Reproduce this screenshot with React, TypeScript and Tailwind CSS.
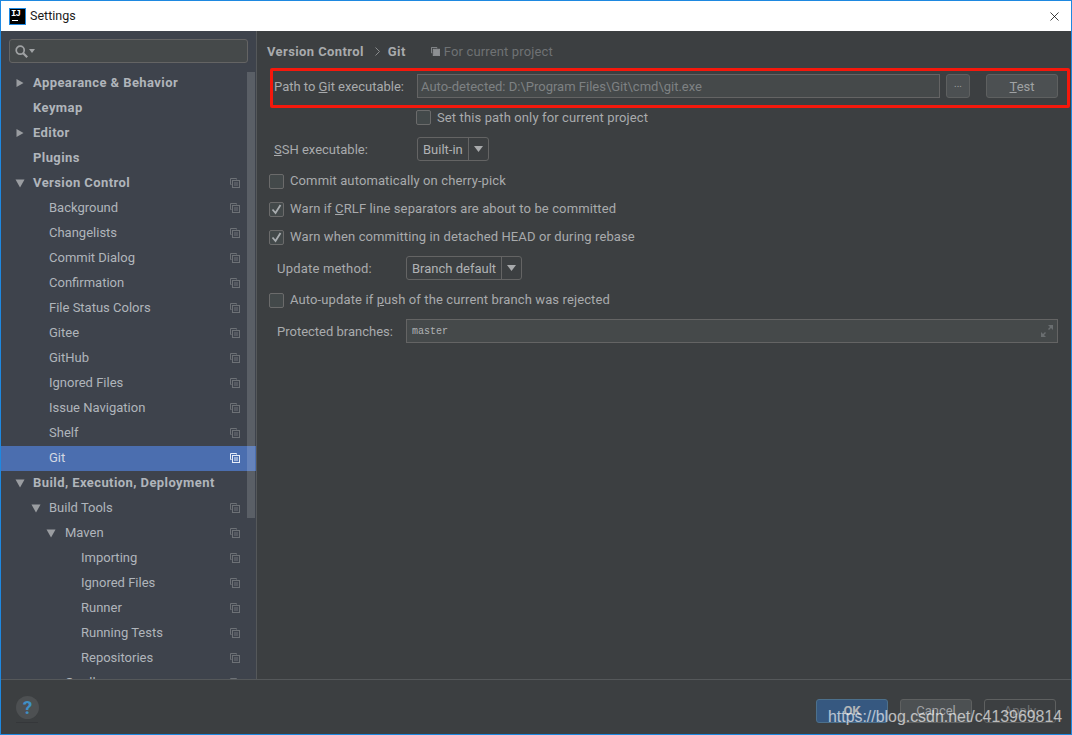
import { ReactNode } from "react";
import { X } from "lucide-react";

const font = { fontFamily: 'Roboto, "Noto Sans", sans-serif' };

type Node = { label: string; level: 0 | 1 | 2 | 3; arrow?: "right" | "down"; copy?: boolean; bold?: boolean; active?: boolean };

const tree: Node[] = [
  { label: "Appearance & Behavior", level: 0, arrow: "right", bold: true },
  { label: "Keymap", level: 0, bold: true },
  { label: "Editor", level: 0, arrow: "right", bold: true },
  { label: "Plugins", level: 0, bold: true },
  { label: "Version Control", level: 0, arrow: "down", bold: true, copy: true },
  { label: "Background", level: 1, copy: true },
  { label: "Changelists", level: 1, copy: true },
  { label: "Commit Dialog", level: 1, copy: true },
  { label: "Confirmation", level: 1, copy: true },
  { label: "File Status Colors", level: 1, copy: true },
  { label: "Gitee", level: 1, copy: true },
  { label: "GitHub", level: 1, copy: true },
  { label: "Ignored Files", level: 1, copy: true },
  { label: "Issue Navigation", level: 1, copy: true },
  { label: "Shelf", level: 1, copy: true },
  { label: "Git", level: 1, copy: true, active: true },
  { label: "Build, Execution, Deployment", level: 0, arrow: "down", bold: true },
  { label: "Build Tools", level: 1, arrow: "down", copy: true },
  { label: "Maven", level: 2, arrow: "down", copy: true },
  { label: "Importing", level: 3, copy: true },
  { label: "Ignored Files", level: 3, copy: true },
  { label: "Runner", level: 3, copy: true },
  { label: "Running Tests", level: 3, copy: true },
  { label: "Repositories", level: 3, copy: true },
  { label: "Gradle", level: 2, arrow: "right", copy: true },
];

const levelClass = ["pl-[32px]", "pl-[48px]", "pl-[64px]", "pl-[80px]"];
const arrowClass = ["left-[14px]", "left-[30px]", "left-[45px]", "left-[61px]"];

const CopyIcon = ({ bright }: { bright?: boolean }) => (
  <svg width="10" height="10" viewBox="0 0 10 10" fill="none" stroke={bright ? "#e6ecf7" : "#6d7176"} strokeWidth="1">
    <path d="M6.5 1.5V.5H.5v6h1" />
    <rect x="2.5" y="2.5" width="7" height="7" />
    <path d="M4 5h4M4 7h4" />
  </svg>
);

const Arrow = ({ dir }: { dir: "right" | "down" }) => (
  <svg width="10" height="10" viewBox="0 0 10 10" fill="#9a9da1">
    {dir === "right" ? <path d="M1.5 1l7 4-7 4z" /> : <path d="M.5 1.5h9L5 9.5z" />}
  </svg>
);

const TreeRow = ({ node }: { node: Node }) => (
  <div
    className={`relative flex h-[25px] shrink-0 items-center pb-[2px] text-[13px] ${levelClass[node.level]} ${
      node.active ? "bg-[#4b6eaf] text-[#d3d8e2]" : "text-[#b0b5bb]"
    } ${node.bold ? "font-bold tracking-[0.42px]" : ""}`}
  >
    {node.arrow && (
      <span className={`absolute ${arrowClass[node.level]} top-[7px]`}>
        <Arrow dir={node.arrow} />
      </span>
    )}
    <span>{node.label}</span>
    {node.copy && (
      <span className="absolute left-[229px] top-[7px]">
        <CopyIcon bright={node.active} />
      </span>
    )}
  </div>
);

const Check = ({ checked }: { checked?: boolean }) => (
  <span className="-ml-px flex h-[15px] w-[15px] shrink-0 items-center justify-center rounded-[2px] border border-[#6b6b6b] bg-[#43494a]">
    {checked && (
      <svg width="11" height="11" viewBox="0 0 11 11" fill="none" stroke="#a9adb0" strokeWidth="1.8">
        <path d="M1.5 5.5l3 3.5 5-8" />
      </svg>
    )}
  </span>
);

const CheckRow = ({ checked, indent, children }: { checked?: boolean; indent?: boolean; children: ReactNode }) => (
  <div className={`flex h-[20px] items-center gap-[6px] ${indent ? "pl-[147px]" : ""} text-[13px] tracking-[0.12px] text-[#a9abad]`}>
    <Check checked={checked} />
    <span>{children}</span>
  </div>
);

const Combo = ({ label, width }: { label: string; width: string }) => (
  <div className={`flex h-[24px] ${width} items-center rounded-[3px] border border-[#646464] bg-[#3c3f41] text-[13px] text-[#b0b2b4]`}>
    <span className="flex-1 truncate pl-[5px] pt-[2px]">{label}</span>
    <span className="flex h-full w-[20px] items-center justify-center border-l border-[#646464]">
      <svg width="9" height="6" viewBox="0 0 9 6" fill="#a8aaac">
        <path d="M0 0h9L4.5 6z" />
      </svg>
    </span>
  </div>
);

const Footer = () => (
  <div className="relative flex h-[55px] shrink-0 items-start justify-between border-t border-[#55585a] bg-[#3c3f41] pl-[15px] pr-[15px] pt-[16px]">
    <div className="relative flex h-[23px] w-[23px] items-center justify-center rounded-full bg-[#4d5052] text-[19px] font-bold leading-none text-[#3f8fc4]">
      ?
      <span className="absolute left-0 top-[26px] h-px w-[22px] bg-[#35373a]" />
    </div>
    <div className="mt-[3px] flex gap-[12px] text-[13px]">
      <button className="h-[24px] w-[72px] rounded-[3px] border border-[#4c708c] bg-[#365880] font-bold text-[#b4b6b8]">OK</button>
      <button className="h-[24px] w-[72px] rounded-[3px] border border-[#5e6060] bg-[#4c5052] text-[#a0a2a4]">Cancel</button>
      <button className="h-[24px] w-[72px] rounded-[3px] border border-[#5e6060] text-[#6f7173]">Apply</button>
    </div>
  </div>
);

export default function App() {
  return (
    <div className="relative flex h-[735px] w-[1072px] flex-col overflow-hidden border border-[#1e88e0] bg-[#3c3f41]" style={font}>
      {/* title bar */}
      <div className="flex h-[30px] shrink-0 items-center bg-white pl-[8px] pr-[9px]">
        <div className="relative h-[17px] w-[17px] border border-[#1e88e0] bg-black">
          <span
            className="absolute left-[1px] top-[1px] text-[9px] font-bold leading-[9px] tracking-[-0.8px] text-white"
            style={{ fontFamily: '"Liberation Mono", monospace' }}
          >
            IJ
          </span>
          <span className="absolute bottom-[3px] left-[2px] h-px w-[6px] bg-white" />
        </div>
        <span className="ml-[4px] text-[12.5px] text-[#1a1a1a]">Settings</span>
        <X size={15} strokeWidth={1.2} className="ml-auto text-black" />
      </div>

      <div className="flex min-h-0 flex-1">
        {/* sidebar */}
        <div className="relative flex w-[256px] shrink-0 flex-col overflow-hidden border-r border-[#55585a] bg-[#3e434c]">
          <div className="mx-[8px] mt-[8px] flex h-[24px] w-[239px] shrink-0 items-center gap-px rounded-[3px] border border-[#646464] bg-[#45494a] pl-[5px]">
            <svg width="13" height="13" viewBox="0 0 13 13" fill="none" stroke="#a0a2a4" strokeWidth="1.7">
              <circle cx="5.2" cy="5.2" r="4" />
              <path d="M8.2 8.2l4 4" strokeWidth="2.2" />
            </svg>
            <svg width="6" height="4" viewBox="0 0 6 4" fill="#a0a2a4">
              <path d="M0 0h6L3 4z" />
            </svg>
          </div>
          <div className="mt-[8px] flex min-h-0 flex-1 flex-col overflow-hidden">
            {tree.map((node, i) => (
              <TreeRow key={i} node={node} />
            ))}
          </div>
          <div className="absolute left-[246px] top-[41px] h-[446px] w-[8px] bg-white/15" />
        </div>

        {/* content */}
        <div className="relative min-w-0 flex-1 px-[13px] pt-[8px]">
          <div className="-ml-[3px] flex h-[24px] items-center pt-px text-[13px]">
            <span className="font-bold tracking-[0.4px] text-[#a9abad]">Version Control</span>
            <svg className="ml-[11px]" width="5" height="9" viewBox="0 0 5 9" fill="none" stroke="#8a8c8e">
              <path d="M.5.5l4 4-4 4" />
            </svg>
            <span className="ml-[8px] font-bold tracking-[0.4px] text-[#a9abad]">Git</span>
            <span className="ml-[25px]">
              <svg width="9" height="9" viewBox="0 0 10 10" fill="#8d9093" stroke="#8d9093">
                <path d="M6.5 1.5V.5H.5v6h1" fill="none" />
                <rect x="2.5" y="2.5" width="7" height="7" />
              </svg>
            </span>
            <span className="ml-[4px] tracking-[0.15px] text-[#6f7274]">For current project</span>
          </div>

          <div className="mt-[11px] flex h-[24px] items-center text-[13px] text-[#a9abad]">
            <span className="w-[147px] shrink-0 pl-[4px] pt-[1px]">
              Path to <u>G</u>it executable:
            </span>
            <div className="flex h-full min-w-0 flex-1 items-center border border-[#646464] bg-[#45494a] pl-[3px] pt-[1px] text-[#7e8183]">
              Auto-detected: D:\Program Files\Git\cmd\git.exe
            </div>
            <button className="ml-[6px] flex h-full w-[24px] items-center justify-center rounded-[3px] border border-[#5e6060] bg-[#4c5052] pb-[5px] text-[10px] text-[#a0a2a4]">
              ...
            </button>
            <button className="ml-[16px] h-full w-[72px] rounded-[3px] border border-[#5e6060] bg-[#4c5052] pt-[2px] text-[#a0a2a4]">
              <u>T</u>est
            </button>
          </div>

          <div className="mt-[9px]">
            <CheckRow indent>
              <span className="relative top-px">Set this path only for current project</span>
            </CheckRow>
          </div>

          <div className="mt-[10px] flex h-[24px] items-center text-[13px] text-[#a9abad]">
            <span className="w-[147px] shrink-0 pl-[4px] pt-[2px]">
              <u>S</u>SH executable:
            </span>
            <Combo label="Built-in" width="w-[72px]" />
          </div>

          <div className="mt-[10px]">
            <CheckRow>Commit automatically on cherry-pick</CheckRow>
          </div>
          <div className="mt-[8px]">
            <CheckRow checked>
              Warn if <u>C</u>RLF line separators are about to be committed
            </CheckRow>
          </div>
          <div className="mt-[8px]">
            <CheckRow checked>Warn when committing in detached HEAD or during rebase</CheckRow>
          </div>

          <div className="mt-[9px] flex h-[24px] items-center text-[13px] text-[#a9abad]">
            <span className="w-[136px] shrink-0 pl-[7px] pt-[2px] tracking-[0.2px]">Update method:</span>
            <Combo label="Branch default" width="w-[116px]" />
          </div>

          <div className="mt-[10px]">
            <CheckRow>
              Auto-update if <u>p</u>ush of the current branch was rejected
            </CheckRow>
          </div>

          <div className="mt-[9px] flex h-[24px] items-center text-[13px] text-[#a9abad]">
            <span className="w-[136px] shrink-0 pl-[7px] pt-[2px]">Protected branches:</span>
            <div className="flex h-full flex-1 items-center justify-between border border-[#646464] bg-[#45494a] pl-[5px] pr-[4px]">
              <span className="text-[10px] text-[#b0b2b4]" style={{ fontFamily: '"Liberation Mono", monospace' }}>
                master
              </span>
              <svg width="12" height="12" viewBox="0 0 12 12" fill="#6a6e70">
                <path d="M12 0v5l-2-2-2 2-1-1 2-2-2-2zM0 12V7l2 2 2-2 1 1-2 2 2 2z" />
              </svg>
            </div>
          </div>

          {/* red annotation drawn over the screenshot */}
          <div className="absolute left-[13px] top-[37px] h-[40px] w-[800px] rounded-[2px] border-[3px] border-[#f5180c]" />
        </div>
      </div>

      <Footer />

      {/* watermark */}
      <span
        className="absolute left-[827px] top-[706px] whitespace-nowrap text-[15.9px] leading-[20px] text-white/65"
        style={{ fontFamily: '"Liberation Sans", sans-serif' }}
      >
        https://blog.csdn.net/c413969814
      </span>
    </div>
  );
}
